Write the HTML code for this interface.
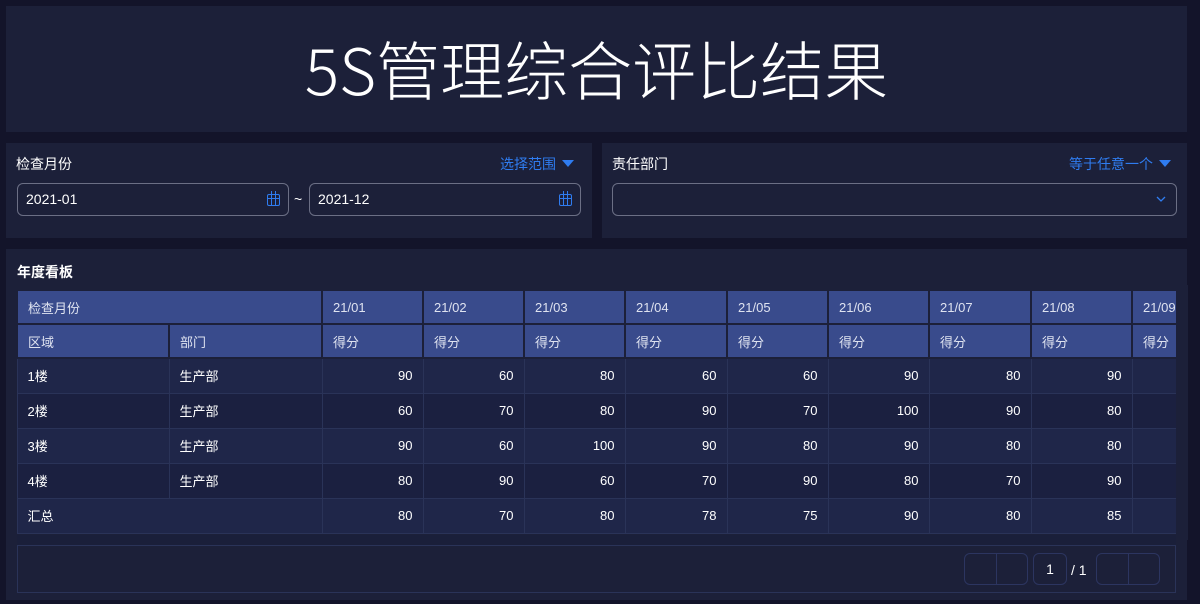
<!DOCTYPE html>
<html><head><meta charset="utf-8"><style>
*{margin:0;padding:0;box-sizing:border-box}
body{width:1200px;height:604px;background:#13142a;font-family:"Liberation Sans","Noto Sans CJK SC",sans-serif;color:#fff;position:relative;overflow:hidden}
.p{position:absolute;background:#1c2039}
.title{left:6px;top:6px;width:1181px;height:126px;text-align:center;font-size:64px;line-height:124px;font-family:"Noto Sans CJK SC",sans-serif;font-weight:300}
.lbl{position:absolute;font-size:14px;top:11px}
.blue{color:#2f7cf0}
.tri{display:inline-block;width:0;height:0;border-left:6px solid transparent;border-right:6px solid transparent;border-top:7px solid #2f7cf0;margin-left:6px;vertical-align:2px}
.inp{position:absolute;top:40px;height:33px;border:1px solid #6b6f85;border-radius:6px;font-size:14px;line-height:31px;padding-left:8px}
.cal{position:absolute;right:8px;top:10px;width:13px;height:12px;border:1.5px solid #2f7cf0;border-radius:2px}
.cal:before{content:"";position:absolute;left:3px;top:-4px;width:3px;height:14px;border-left:1.5px solid #2f7cf0;border-right:1.5px solid #2f7cf0}
.cal:after{content:"";position:absolute;left:0;right:0;top:3px;border-top:1.5px solid #2f7cf0}
table{position:absolute;left:17px;top:290px;border-collapse:collapse;table-layout:fixed;font-size:13px}
td{border:1px solid #2a3358;height:35px;padding:0 10px;white-space:nowrap;overflow:hidden}
tr.h td{background:#394b8c;border:2px solid #1c2039;color:#dfe3f0;height:34px}
tr.a td{background:#1f2649}
tr.b td{background:#1b2040}
td.n{text-align:right}
.pg{position:absolute;top:553px;height:32px;border:1px solid #2c3560;border-radius:6px}
</style></head><body>
<div class="p title">5S管理综合评比结果</div>
<div class="p" style="left:6px;top:143px;width:586px;height:95px">
 <div class="lbl" style="left:10px">检查月份</div>
 <div class="lbl blue" style="right:18px">选择范围<span class="tri"></span></div>
 <div class="inp" style="left:11px;width:272px">2021-01<div class="cal"></div></div>
 <div style="position:absolute;left:288px;top:48px;font-size:14px">~</div>
 <div class="inp" style="left:303px;width:272px">2021-12<div class="cal"></div></div>
</div>
<div class="p" style="left:602px;top:143px;width:585px;height:95px">
 <div class="lbl" style="left:10px">责任部门</div>
 <div class="lbl blue" style="right:16px">等于任意一个<span class="tri"></span></div>
 <div class="inp" style="left:10px;width:565px"><svg style="position:absolute;right:10px;top:12px" width="10" height="6" viewBox="0 0 10 6"><path d="M1 1l4 4 4-4" fill="none" stroke="#2f7cf0" stroke-width="1.3"/></svg></div>
</div>
<div class="p" style="left:6px;top:249px;width:1181px;height:351px">
 <div style="position:absolute;left:11px;top:13px;font-size:14px;font-weight:bold">年度看板</div>
 <div style="position:absolute;left:11px;top:286px;width:1159px;height:10px;background:#1a1f3a"></div>
 <div style="position:absolute;left:11px;top:296px;width:1159px;height:48px;border:1px solid #2a3358"></div>
</div>
<table style="width:1215px;left:16px;top:289px">
<colgroup><col style="width:152px"><col style="width:153px"><col style="width:101px"><col style="width:101px"><col style="width:101px"><col style="width:102px"><col style="width:101px"><col style="width:101px"><col style="width:102px"><col style="width:101px"><col style="width:101px"></colgroup>
<tr class="h"><td colspan="2">检查月份</td><td>21/01</td><td>21/02</td><td>21/03</td><td>21/04</td><td>21/05</td><td>21/06</td><td>21/07</td><td>21/08</td><td>21/09</td></tr>
<tr class="h"><td>区域</td><td>部门</td><td>得分</td><td>得分</td><td>得分</td><td>得分</td><td>得分</td><td>得分</td><td>得分</td><td>得分</td><td>得分</td></tr>
<tr class="a"><td>1楼</td><td>生产部</td><td class="n">90</td><td class="n">60</td><td class="n">80</td><td class="n">60</td><td class="n">60</td><td class="n">90</td><td class="n">80</td><td class="n">90</td><td></td></tr>
<tr class="b"><td>2楼</td><td>生产部</td><td class="n">60</td><td class="n">70</td><td class="n">80</td><td class="n">90</td><td class="n">70</td><td class="n">100</td><td class="n">90</td><td class="n">80</td><td></td></tr>
<tr class="a"><td>3楼</td><td>生产部</td><td class="n">90</td><td class="n">60</td><td class="n">100</td><td class="n">90</td><td class="n">80</td><td class="n">90</td><td class="n">80</td><td class="n">80</td><td></td></tr>
<tr class="b"><td>4楼</td><td>生产部</td><td class="n">80</td><td class="n">90</td><td class="n">60</td><td class="n">70</td><td class="n">90</td><td class="n">80</td><td class="n">70</td><td class="n">90</td><td></td></tr>
<tr class="a"><td colspan="2">汇总</td><td class="n">80</td><td class="n">70</td><td class="n">80</td><td class="n">78</td><td class="n">75</td><td class="n">90</td><td class="n">80</td><td class="n">85</td><td></td></tr>
</table>
<div style="position:absolute;left:1176px;top:285px;width:12px;height:255px;background:#1c2039"></div>
<div style="position:absolute;left:1188px;top:0;width:12px;height:604px;background:#13142a"></div>
<div class="pg" style="left:964px;width:64px"><div style="position:absolute;left:31px;top:0;bottom:0;border-left:1px solid #2c3560"></div></div>
<div class="pg" style="left:1033px;width:34px;text-align:center;font-size:14px;line-height:30px">1</div>
<div style="position:absolute;left:1071px;top:562px;font-size:14px">/ 1</div>
<div class="pg" style="left:1096px;width:64px"><div style="position:absolute;left:31px;top:0;bottom:0;border-left:1px solid #2c3560"></div></div>
</body></html>
